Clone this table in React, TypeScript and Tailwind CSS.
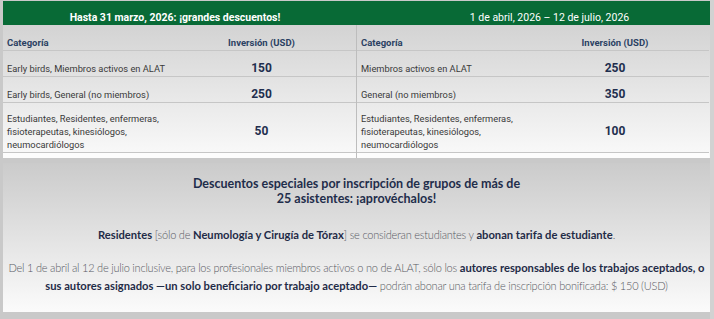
import React from "react";

type Row = { cat: string[]; price: string };

const left: Row[] = [
  { cat: ["Early birds, Miembros activos en ALAT"], price: "150" },
  { cat: ["Early birds, General (no miembros)"], price: "250" },
  {
    cat: ["Estudiantes, Residentes, enfermeras,", "fisioterapeutas, kinesiólogos,", "neumocardiólogos"],
    price: "50",
  },
];

const right: Row[] = [
  { cat: ["Miembros activos en ALAT"], price: "250" },
  { cat: ["General (no miembros)"], price: "350" },
  {
    cat: ["Estudiantes, Residentes, enfermeras,", "fisioterapeutas, kinesiólogos,", "neumocardiólogos"],
    price: "100",
  },
];

function Half({ rows, divider }: { rows: Row[]; divider?: boolean }) {
  return (
    <div className={"w-[353px] flex flex-col " + (divider ? "border-l border-[#bdbdbd]" : "")}>
      <div className="grid grid-cols-[164px_1fr] pt-[11px] pb-[1px] leading-[13px] text-[9.5px] font-bold text-[#2b4163]">
        <div className="pl-[4px]">Categoría</div>
        <div className="text-center">Inversión (USD)</div>
      </div>
      {rows.map((r, i) => (
        <div
          key={i}
          className={
            "grid grid-cols-[164px_1fr] border-t border-[#c6c6c6] pb-[1px] " +
            (r.cat.length > 1 ? "pt-[9px]" : "pt-[11px]")
          }
        >
          <div className="pl-[4px] text-[9.3px] leading-[13px] text-[#3a3a3a] whitespace-nowrap">
            {r.cat.map((l, j) => (
              <div key={j}>{l}</div>
            ))}
          </div>
          <div className="flex items-center justify-center text-[12px] leading-[13px] font-bold text-[#1f2e4e]">
            {r.price}
          </div>
        </div>
      ))}
      <div className="border-t border-[#c6c6c6] h-[6px] bg-[#fdfdfd]" />
    </div>
  );
}

export default function App() {
  const light = "font-light text-[#595a64] text-[11px] tracking-[-0.02em]";
  const bold = "font-bold text-[#1f2b47] text-[11.2px]";
  return (
    <div className="w-[714px] h-[319px] bg-[#c9c9c9] flex overflow-hidden">
      <div className="w-[710px] pl-[3px] pt-[1px] flex flex-col">
        <div className="w-[707px] font-['Roboto',sans-serif]">
          <div className="flex h-[24px] bg-[#086a36] text-white text-[10.5px] leading-[13px]">
            <div className="w-[353px] text-center pt-[10px] pr-[9px] font-bold">
              Hasta 31 marzo, 2026: ¡grandes descuentos!
            </div>
            <div className="flex-1 text-center pt-[10px] pl-[33px]">
              1 de abril, 2026 – 12 de julio, 2026
            </div>
          </div>
          <div className="flex bg-gradient-to-b from-[#d3d3d3] to-[#fafafa]">
            <Half rows={left} />
            <Half rows={right} divider />
          </div>
        </div>
        <div className="mt-[5px] w-[707px] h-[149px] pt-[13px] bg-gradient-to-b from-[#cbcbcb] to-[#fbfbfb] font-['Lato',sans-serif] text-center">
          <div className="text-[12.5px] leading-[15px] font-bold text-[#1f2d4b]">
            Descuentos especiales por inscripción de grupos de más de
            <br />
            25 asistentes: ¡aprovéchalos!
          </div>
          <div className="mt-[19px] leading-[16px] whitespace-nowrap">
            <span className={bold}>Residentes</span>
            <span className={light}> [sólo de </span>
            <span className={bold}>Neumología y Cirugía de Tórax</span>
            <span className={light}>] se consideran estudiantes y </span>
            <span className={bold}>abonan tarifa de estudiante</span>
            <span className={light}>.</span>
          </div>
          <div className="mt-[15px] leading-[16px] whitespace-nowrap">
            <div>
              <span className={light}>
                Del 1 de abril al 12 de julio inclusive, para los profesionales miembros activos o no de ALAT, sólo los{" "}
              </span>
              <span className={bold}>autores responsables de los trabajos aceptados, o</span>
            </div>
            <div>
              <span className={bold}>sus autores asignados —un solo beneficiario por trabajo aceptado—</span>
              <span className={light}> podrán abonar una tarifa de inscripción bonificada: $ 150 (USD)</span>
            </div>
          </div>
        </div>
      </div>
      <div className="w-[4px] bg-[#d2d2d2]" />
    </div>
  );
}
